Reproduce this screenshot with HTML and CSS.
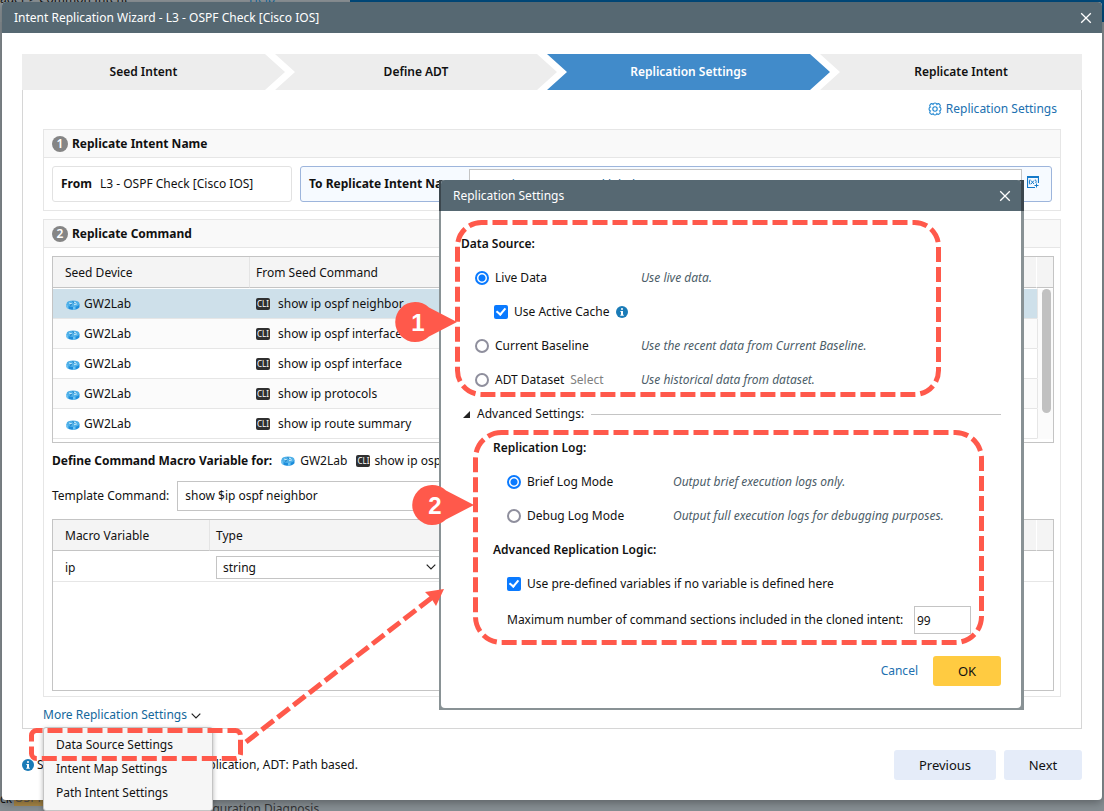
FILE: index.html
```html
<!DOCTYPE html>
<html lang="en">
<head>
    <meta charset="UTF-8">
    <meta name="viewport" content="width=device-width, initial-scale=1.0">
    <title>Intent Replication Wizard</title>
    <link rel="stylesheet" href="styles.css">
</head>
<body>
    <!-- Shared icons -->
    <svg width="0" height="0" class="icon-defs" aria-hidden="true">
        <symbol id="icon-router" viewBox="0 0 14 10">
            <path d="M.5 4v2.500c0 1.900 2.900 3.200 6.500 3.200s6.500-1.300 6.500-3.200V4z" fill="#1c8ddb"/>
            <path d="M.5 4v2.500c0 1 .8 1.800 2 2.400V4zM7 6h2.500v3.500Q8.300 9.700 7 9.700z" fill="#6cc4f3"/>
            <ellipse cx="7" cy="3.700" rx="6.500" ry="3.300" fill="#4fb0e8"/>
            <path d="M3 3l3 1M8 4.800l3-1M8 2.200l2 .6" stroke="#d8effb" stroke-width="0.900" fill="none"/>
            <path d="M4 5.300l2-.8M6.500 1.500l1.500 1" stroke="#1673b8" stroke-width="0.900" fill="none"/>
        </symbol>
        <symbol id="icon-close" viewBox="0 0 12 12">
            <path d="M1.200 1.200l9.600 9.600M10.800 1.200L1.200 10.800" stroke="#fff" stroke-width="1.300" fill="none"/>
        </symbol>
        <symbol id="icon-chevron" viewBox="0 0 10 6">
            <path d="M0.700 0.700L5 5l4.300-4.300" stroke="#222" stroke-width="1.200" fill="none"/>
        </symbol>
        <symbol id="icon-info" viewBox="0 0 12 12">
            <circle cx="6" cy="6" r="6" fill="#1a7bb7"/>
            <path d="M5 2.200h2v1.600H5zM4.400 4.900H7v3.800h.8v1H4.300v-1H5V5.900h-.6z" fill="#fff"/>
        </symbol>
    </svg>

    <!-- Page behind the wizard -->
    <div class="backdrop">
        <div class="backdrop-top"><span>ager &gt; Common Intent</span><span class="help">Help</span></div>
        <div class="backdrop-bottom">
            <span>ck</span><mark>OSPF</mark><span class="diagnosis">Configuration Diagnosis</span>
        </div>
    </div>

    <main class="wizard">
        <header class="title-bar">
            <h1>Intent Replication Wizard - L3 - OSPF Check [Cisco IOS]</h1>
            <button type="button" class="close" aria-label="Close wizard"><svg width="12" height="12"><use href="#icon-close"/></svg></button>
        </header>

        <div class="wizard-body">
            <ol class="steps">
                <li>Seed Intent</li>
                <li>Define ADT</li>
                <li class="active">Replication Settings</li>
                <li>Replicate Intent</li>
            </ol>

            <div class="frame">
                <div class="top-link">
                    <a href="#settings">
                        <svg width="16" height="16" viewBox="0 0 16 16" fill="none" stroke="#1c84d0" stroke-width="1.100">
                            <path d="M9.900 3.400A2 2 0 0 1 12.700 3.300A2 2 0 0 1 12.600 6.100A2 2 0 0 1 12.600 9.900A2 2 0 0 1 12.700 12.700A2 2 0 0 1 9.900 12.600A2 2 0 0 1 6.100 12.600A2 2 0 0 1 3.300 12.700A2 2 0 0 1 3.400 9.900A2 2 0 0 1 3.400 6.100A2 2 0 0 1 3.300 3.300A2 2 0 0 1 6.100 3.400A2 2 0 0 1 9.900 3.400z"/>
                            <circle cx="8" cy="8" r="2.200"/>
                        </svg>
                        Replication Settings
                    </a>
                </div>

                <section class="panel">
                    <h2><span class="badge">1</span>Replicate Intent Name</h2>
                    <div class="names">
                        <div class="name-from"><b>From</b> L3 - OSPF Check [Cisco IOS]</div>
                        <div class="name-to">
                            <label for="intent-name">To Replicate Intent Name</label>
                            <input type="text" id="intent-name" value="Input intent name and label">
                            <svg width="12" height="12" viewBox="0 0 12 12" fill="none" stroke="#1479c9">
                                <path d="M11.500 7V1H.5v10.500H8" stroke-width="1.200"/>
                                <path d="M0 1h12" stroke-width="2"/>
                                <path d="M3 3.500Q1.500 6 3 8.500M4 4.500l3 3.500M7 4.500L4 8M8.300 3.500Q9.800 5.500 8.800 7M9.500 7.500v4M7.500 9.500h4" stroke-width="1"/>
                            </svg>
                        </div>
                    </div>
                </section>

                <section class="panel commands">
                    <h2><span class="badge">2</span>Replicate Command</h2>
                    <div class="grid-box">
                        <table class="seed">
                            <thead>
                                <tr><th class="col-device">Seed Device</th><th>From Seed Command</th><th class="col-end"></th></tr>
                            </thead>
                            <tbody>
                                <tr class="selected"><td><svg class="router"><use href="#icon-router"/></svg>GW2Lab</td><td><span class="cli">CLI</span>show ip ospf neighbor</td><td class="track"></td></tr>
                                <tr><td><svg class="router"><use href="#icon-router"/></svg>GW2Lab</td><td><span class="cli">CLI</span>show ip ospf interface</td><td class="track"></td></tr>
                                <tr><td><svg class="router"><use href="#icon-router"/></svg>GW2Lab</td><td><span class="cli">CLI</span>show ip ospf interface</td><td class="track"></td></tr>
                                <tr><td><svg class="router"><use href="#icon-router"/></svg>GW2Lab</td><td><span class="cli">CLI</span>show ip protocols</td><td class="track"></td></tr>
                                <tr><td><svg class="router"><use href="#icon-router"/></svg>GW2Lab</td><td><span class="cli">CLI</span>show ip route summary</td><td class="track"></td></tr>
                            </tbody>
                        </table>
                        <div class="thumb"></div>
                    </div>

                    <div class="macro-for">
                        <b>Define Command Macro Variable for:</b>
                        <svg class="router"><use href="#icon-router"/></svg><span>GW2Lab</span>
                        <span class="cli">CLI</span><span>show ip ospf neighbor</span>
                    </div>

                    <div class="template">
                        <label for="template">Template Command:</label>
                        <input type="text" id="template" value="show $ip ospf neighbor">
                    </div>

                    <div class="grid-box macros">
                        <table>
                            <thead>
                                <tr><th class="col-macro">Macro Variable</th><th class="col-type">Type</th><th></th><th class="col-end"></th></tr>
                            </thead>
                            <tbody>
                                <tr>
                                    <td>ip</td>
                                    <td>
                                        <div class="select">
                                            <select aria-label="Type"><option>string</option></select>
                                            <svg width="10" height="6"><use href="#icon-chevron"/></svg>
                                        </div>
                                    </td>
                                    <td></td>
                                    <td></td>
                                </tr>
                            </tbody>
                        </table>
                    </div>
                </section>

                <div class="more">
                    <button type="button" class="more-button">More Replication Settings <svg width="10" height="6"><use href="#icon-chevron"/></svg></button>
                    <ul class="menu">
                        <li><a href="#data-source">Data Source Settings</a></li>
                        <li><a href="#intent-map">Intent Map Settings</a></li>
                        <li><a href="#path-intent">Path Intent Settings</a></li>
                    </ul>
                </div>
            </div>

            <footer class="wizard-footer">
                <svg width="12" height="12"><use href="#icon-info"/></svg>
                <p>Seed Intent: Network based replication, ADT: Path based.</p>
                <button type="button" class="previous">Previous</button>
                <button type="button">Next</button>
            </footer>
        </div>
    </main>

    <!-- Replication Settings dialog -->
    <div class="dialog-edge">
        <form class="dialog">
            <header class="title-bar">
                <h1>Replication Settings</h1>
                <button type="button" class="close" aria-label="Close dialog"><svg width="12" height="12"><use href="#icon-close"/></svg></button>
            </header>

            <div class="dialog-body">
                <h3>Data Source:</h3>
                <div class="options">
                    <div class="option">
                        <input type="radio" name="source" id="live" checked>
                        <div class="choice"><label for="live">Live Data</label></div>
                        <em>Use live data.</em>
                    </div>
                    <div class="option nested">
                        <input type="checkbox" id="cache" checked>
                        <div class="choice">
                            <label for="cache">Use Active Cache</label>
                            <svg width="12" height="12"><use href="#icon-info"/></svg>
                        </div>
                    </div>
                    <div class="option">
                        <input type="radio" name="source" id="baseline">
                        <div class="choice"><label for="baseline">Current Baseline</label></div>
                        <em>Use the recent data from Current Baseline.</em>
                    </div>
                    <div class="option">
                        <input type="radio" name="source" id="dataset">
                        <div class="choice"><label for="dataset">ADT Dataset</label><span class="select-link">Select</span></div>
                        <em>Use historical data from dataset.</em>
                    </div>
                </div>

                <div class="advanced-title">
                    <svg width="7" height="7" viewBox="0 0 7 7"><path d="M7 0v7H0z" fill="#222"/></svg>
                    <span>Advanced Settings:</span>
                </div>

                <div class="advanced">
                    <h3>Replication Log:</h3>
                    <div class="options">
                        <div class="option">
                            <input type="radio" name="log" id="brief" checked>
                            <div class="choice"><label for="brief">Brief Log Mode</label></div>
                            <em>Output brief execution logs only.</em>
                        </div>
                        <div class="option">
                            <input type="radio" name="log" id="debug">
                            <div class="choice"><label for="debug">Debug Log Mode</label></div>
                            <em>Output full execution logs for debugging purposes.</em>
                        </div>
                    </div>
                    <h3>Advanced Replication Logic:</h3>
                    <div class="options">
                        <div class="option">
                            <input type="checkbox" id="predefined" checked>
                            <div class="choice"><label for="predefined">Use pre-defined variables if no variable is defined here</label></div>
                        </div>
                        <div class="option maximum">
                            <label for="max">Maximum number of command sections included in the cloned intent:</label>
                            <input type="text" id="max" value="99">
                        </div>
                    </div>
                </div>

                <div class="dialog-actions">
                    <button type="button" class="cancel">Cancel</button>
                    <button type="submit" class="ok">OK</button>
                </div>
            </div>
        </form>
    </div>

    <!-- Callouts -->
    <svg class="callouts" width="1000" height="800" viewBox="0 0 1000 800">
        <g fill="none" stroke="#ff594b" stroke-width="5" stroke-dasharray="15 5">
            <rect x="457.500" y="222.500" width="481" height="172" rx="24" stroke-dashoffset="9"/>
            <rect x="475.500" y="432.500" width="506" height="210" rx="26" stroke-dashoffset="8"/>
            <rect x="31.500" y="730.500" width="209" height="28" rx="5" stroke-dashoffset="9"/>
            <path d="M246 742L434 596"/>
        </g>
        <g fill="#ff594b">
            <path d="M444 589L425 592L431 598L436 606z"/>
            <path d="M457 322L429 336.500A20 20 0 1 1 429 307.500z"/>
            <path d="M474 505L446 519.500A20 20 0 1 1 446 490.500z"/>
        </g>
        <g class="callout-number">
            <text x="418" y="331">1</text>
            <text x="435" y="514">2</text>
        </g>
    </svg>
</body>
</html>
```
FILE: styles.css
```css
* {
    box-sizing: border-box;
}

body {
    margin: 0;
    min-height: 100vh;
    position: relative;
    overflow: hidden;
    padding: 2px 2px 11px;
    background: #868e93;
    color: #111;
    font-family: "Noto Sans", "Open Sans", sans-serif;
    font-size: 12px;
    line-height: 18px;
}

h1, h2, h3, p, ol, ul {
    margin: 0;
    padding: 0;
    list-style: none;
    font-size: 12px;
}

input, select, button {
    font: inherit;
    color: inherit;
}

button {
    border: none;
    border-radius: 3px;
    cursor: pointer;
}

a {
    text-decoration: none;
}

.icon-defs {
    position: absolute;
}

/* Page behind */
.backdrop {
    position: absolute;
    inset: 0;
    overflow: hidden;
    color: #111;
}

.backdrop-top {
    height: 22px;
    background: linear-gradient(to right, #8b9296 350px, #004a7c 350px);
}

.backdrop-top span {
    position: absolute;
    top: -10px;
    left: 0;
}

.backdrop-top .help {
    left: 249px;
    color: #14689c;
}

.backdrop-bottom {
    position: absolute;
    left: 0;
    right: 0;
    bottom: 0;
    height: 21px;
    display: flex;
    background: #868e93;
}

.backdrop-bottom mark {
    margin-left: 2px;
    height: 16px;
    line-height: 16px;
    background: #a88746;
    color: #555;
}

.backdrop-bottom .diagnosis {
    position: absolute;
    left: 183px;
    top: 10px;
    color: #333;
}

/* Wizard */
.wizard {
    position: relative;
    background: #fff;
    border-radius: 4px;
    box-shadow: 0 3px 8px rgba(0, 0, 0, 0.3);
}

.title-bar {
    display: flex;
    align-items: center;
    justify-content: space-between;
    height: 31px;
    padding: 0 10px 0 12px;
    background: #566872;
    color: #fff;
    border-radius: 4px 4px 0 0;
}

.title-bar h1 {
    font-weight: 400;
}

.close {
    display: flex;
    padding: 0;
    background: none;
}

.wizard-body {
    padding: 21px 20px 20px;
}

.steps {
    display: grid;
    grid-template-columns: 253fr 272fr 273fr 262fr;
    font-weight: 600;
    text-align: center;
}

/* Each step is an arrow that reaches into the next column */
.steps li {
    height: 36px;
    margin-right: -10px;
    line-height: 36px;
    background: #ededed;
    clip-path: polygon(0 0, calc(100% - 20px) 0, 100% 50%, calc(100% - 20px) 100%, 0 100%, 20px 50%);
}

.steps li:first-child {
    padding-right: 20px;
    clip-path: polygon(0 0, calc(100% - 20px) 0, 100% 50%, calc(100% - 20px) 100%, 0 100%);
}

.steps li:last-child {
    margin-right: 0;
    padding-left: 20px;
    clip-path: polygon(0 0, 100% 0, 100% 100%, 0 100%, 20px 50%);
}

.steps .active {
    color: #fff;
    background: #418bca;
}

.frame {
    padding: 0 20px;
    border: 1px solid #d6d6d6;
    border-top: none;
}

.top-link {
    display: flex;
    justify-content: flex-end;
    height: 39px;
    padding: 10px 4px 0 0;
}

.top-link a {
    display: flex;
    align-items: center;
    gap: 3px;
    height: 18px;
    color: #2070b0;
}

.panel {
    border: 1px solid #e6e6e6;
    margin-bottom: 8px;
}

.panel h2 {
    display: flex;
    align-items: center;
    gap: 4px;
    height: 28px;
    padding-left: 8px;
    background: #f9f9f9;
    border-bottom: 1px solid #e6e6e6;
    font-weight: 700;
}

.badge {
    width: 16px;
    height: 16px;
    border-radius: 50%;
    background: #858585;
    color: #fff;
    line-height: 16px;
    text-align: center;
    font-weight: 600;
}

.names {
    display: flex;
    gap: 8px;
    padding: 8px;
}

.name-from, .name-to {
    display: flex;
    align-items: center;
    gap: 8px;
    height: 36px;
    padding: 0 8px;
    border: 1px solid #e2e2e2;
    border-radius: 3px;
}

.name-from {
    width: 240px;
}

.name-to {
    flex: 1;
    gap: 5px;
    padding-right: 12px;
    background: #f6faff;
    border-color: #9db5dc;
}

.name-to label {
    width: 155px;
    font-weight: 700;
    white-space: nowrap;
}

.name-to input {
    flex: 1;
    height: 30px;
    padding: 0 8px;
    border: 1px solid #c4c4c4;
    color: #14689c;
}

.name-to svg {
    margin-bottom: 4px;
}

.commands {
    padding-bottom: 5px;
    margin-bottom: 7px;
}

/* Tables */
.grid-box {
    position: relative;
    margin: 8px 6px 0 8px;
    border: 1px solid #c4c4c4;
    overflow: hidden;
}

table {
    width: 100%;
    border-collapse: separate;
    border-spacing: 0;
    table-layout: fixed;
}

th {
    height: 31px;
    padding: 2px 6px 0;
    background: #f4f4f4;
    border-bottom: 1px solid #c4c4c4;
    border-right: 1px solid #e4e4e4;
    font-weight: 400;
    text-align: left;
}

th:first-child, td:first-child {
    padding-left: 12px;
}

th:nth-last-child(2) {
    border-right-color: #fff;
}

th:last-child {
    border-right: none;
}

td {
    height: 30px;
    padding: 0 6px;
    border-bottom: 1px solid #e6e6e6;
}

.seed {
    margin-bottom: 3px;
}

.seed tbody tr:nth-child(even) td {
    background: #fbfbfb;
}

.seed .selected td {
    height: 31px;
    background: #cee0ea;
    border-top: 1px solid #fff;
}

.seed tbody td {
    padding-top: 1px;
}

.seed tbody tr .track, .seed .selected .track {
    background: #fbfbfb;
    border-left: 1px solid #e6e6e6;
    border-bottom-color: #fbfbfb;
}

.col-device {
    width: 197px;
}

.col-macro {
    width: 157px;
}

.col-type {
    width: 239px;
}

.col-end {
    width: 16px;
}

.thumb {
    position: absolute;
    top: 32px;
    right: 2px;
    width: 9px;
    height: 124px;
    border-radius: 5px;
    background: #c1c1c1;
}

.router {
    width: 14px;
    height: 10px;
    margin: 0 4px 0 1px;
    vertical-align: -2px;
}

.cli {
    display: inline-block;
    width: 14px;
    height: 12px;
    margin-right: 8px;
    border-radius: 2px;
    background: #303030;
    color: #fff;
    font-size: 8px;
    line-height: 12px;
    text-align: center;
    vertical-align: 1px;
}

.macro-for {
    display: flex;
    align-items: center;
    height: 38px;
    padding: 0 0 2px 8px;
    white-space: nowrap;
}

.macro-for .router {
    margin: 0 5px 0 9px;
}

.macro-for .cli {
    margin: 0 4px 0 9px;
}

.template {
    display: flex;
    align-items: center;
    gap: 8px;
    padding: 0 6px 0 8px;
}

.template input {
    width: 600px;
    height: 30px;
    padding: 0 7px 2px;
    border: 1px solid #c4c4c4;
}

.macros {
    min-height: 172px;
}

.macros td {
    height: 31px;
    padding-top: 3px;
}

.select {
    position: relative;
    height: 23px;
}

.select select {
    display: block;
    width: 100%;
    height: 23px;
    padding: 0 6px;
    border: 1px solid #c4c4c4;
    background: #fff;
    appearance: none;
}

.select svg {
    position: absolute;
    right: 7px;
    top: 8px;
}

.more {
    position: relative;
    height: 24px;
    padding-top: 2px;
}

.more-button {
    padding: 0;
    background: none;
    color: #14689c;
}

.more-button svg {
    margin-left: 1px;
}

.menu {
    position: absolute;
    z-index: 1;
    top: 23px;
    left: 0;
    width: 170px;
    padding: 5px 12px;
    background: #f6f6f6;
    border: 1px solid #c4c4c4;
    border-radius: 3px;
    box-shadow: 0 2px 5px rgba(0, 0, 0, 0.3);
}

.menu a {
    display: block;
    line-height: 24px;
    color: #111;
}

.wizard-footer {
    display: flex;
    align-items: center;
    padding-top: 21px;
}

.wizard-footer p {
    flex: 1;
    margin-left: 3px;
}

.wizard-footer button {
    width: 78px;
    height: 30px;
    margin-left: 8px;
    background: #e5ecf9;
    font-size: 13px;
}

.wizard-footer .previous {
    width: 102px;
}

/* Dialog */
.dialog-edge {
    position: absolute;
    top: 180px;
    left: 439px;
    width: 585px;
    padding: 0 3px 2px 2px;
    background: linear-gradient(#3b464d 31px, #899295 31px);
}

.dialog {
    background: #fff;
    border-radius: 4px;
}

.dialog-body {
    padding: 16px 20px 22px;
}

h3 {
    height: 34px;
    line-height: 34px;
    font-weight: 600;
}

.options {
    padding-left: 14px;
}

.option {
    display: grid;
    grid-template-columns: 14px 140px 1fr;
    align-items: center;
    column-gap: 6px;
    height: 34px;
}

.choice {
    display: flex;
    align-items: center;
    gap: 6px;
    white-space: nowrap;
}

.option em {
    color: #4c5d68;
}

.nested {
    padding-left: 19px;
}

.option input[type="radio"], .option input[type="checkbox"] {
    appearance: none;
    width: 14px;
    height: 14px;
    margin: 0;
    border: 2px solid #8f8f9d;
    border-radius: 50%;
}

.option input[type="radio"]:checked {
    border-color: #0a7aff;
    background: radial-gradient(circle, #0a7aff 3px, #fff 4px);
}

.option input[type="checkbox"] {
    position: relative;
    border: none;
    border-radius: 2px;
    background: #0a7aff;
}

.option input[type="checkbox"]::after {
    content: "";
    position: absolute;
    left: 4px;
    top: 1px;
    width: 4px;
    height: 7px;
    border: solid #fff;
    border-width: 0 2px 2px 0;
    transform: rotate(40deg);
}

.select-link {
    color: #808080;
}

.advanced-title {
    display: flex;
    align-items: center;
    height: 34px;
    padding-left: 2px;
    gap: 7px;
}

.advanced-title::after {
    content: "";
    flex: 1;
    height: 1px;
    background: #c4c4c4;
}

.advanced {
    padding-left: 32px;
}

.option.maximum {
    display: flex;
    align-items: center;
    justify-content: space-between;
    height: 38px;
    padding-right: 30px;
}

.maximum input {
    width: 57px;
    height: 28px;
    padding: 0 2px;
    border: 1px solid #c4c4c4;
}

.dialog-actions {
    display: flex;
    justify-content: flex-end;
    gap: 15px;
    padding-top: 17px;
}

.cancel {
    padding: 0;
    background: none;
    color: #2070b0;
}

.ok {
    width: 68px;
    height: 30px;
    background: #ffcb41;
    font-size: 13px;
}

/* Callouts */
.callouts {
    position: absolute;
    z-index: 2;
    top: 0;
    left: 0;
    pointer-events: none;
}

.callout-number {
    fill: #fff;
    font-family: "Liberation Sans", Arial, sans-serif;
    font-size: 24px;
    font-weight: 700;
    text-anchor: middle;
}
```
